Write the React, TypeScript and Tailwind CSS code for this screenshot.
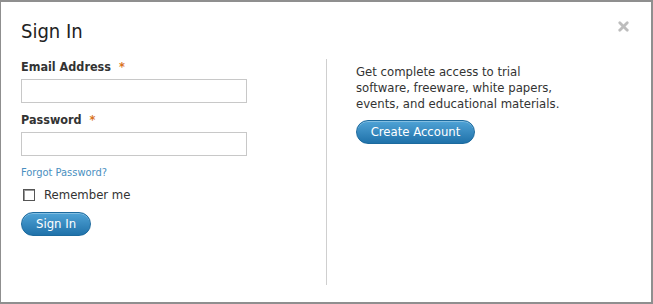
import { X } from "lucide-react";

const font = { fontFamily: '"DejaVu Sans Condensed", "DejaVu Sans", Tahoma, sans-serif' };

function Field({ label }: { label: string }) {
  return (
    <div className="flex flex-col">
      <label className="text-[12.5px] leading-[16px] font-bold text-[#333] h-[16px]">
        {label}
        <span className="text-[#d9731e] ml-[8px]">*</span>
      </label>
      <input className="mt-[4px] w-[226px] h-[24px] border border-[#c8c8c8] bg-white outline-none" />
    </div>
  );
}

function BlueButton({ children, w }: { children: string; w: string }) {
  return (
    <button
      className={`${w} h-[24px] rounded-full text-white text-[13px] leading-none border border-[#1c6a9e] bg-gradient-to-b from-[#4fa3d6] to-[#1f72aa] shadow-[inset_0_1px_0_rgba(255,255,255,0.3)]`}
    >
      {children}
    </button>
  );
}

export default function App() {
  return (
    <div className="w-[653px] h-[304px] bg-[#8f8f8f] pt-[2px] pl-[1px] pr-[2px] pb-[2px]" style={font}>
      <div className="relative w-full h-full bg-white flex flex-col pl-[20px]">
        <h1 className="mt-[17px] text-[20px] leading-[24px] text-[#222] h-[24px]">Sign In</h1>
        <button className="absolute right-[20px] top-[17px] text-[#bdbdbd]">
          <X className="size-[15px]" strokeWidth={4.5} />
        </button>
        <div className="flex mt-[16px]">
          <div className="w-[305px] flex flex-col">
            <Field label="Email Address" />
            <div className="mt-[9px]">
              <Field label="Password" />
            </div>
            <a className="mt-[10px] text-[11px] leading-[13px] text-[#4a8fc0]">Forgot Password?</a>
            <div className="flex items-center mt-[9px] h-[14px]">
              <span className="ml-[2px] w-[12px] h-[12px] border border-[#555] bg-white shadow-[inset_1px_1px_0_#999]" />
              <span className="ml-[9px] text-[13px] leading-[14px] text-[#333]">Remember me</span>
            </div>
            <div className="mt-[9px]">
              <BlueButton w="w-[70px]">Sign In</BlueButton>
            </div>
          </div>
          <div className="w-px bg-[#cfcfcf] h-[226px]" />
          <div className="pl-[29px] pt-[5px] flex flex-col">
            <p className="text-[13px] leading-[16px] text-[#333] w-[220px]">
              Get complete access to trial software, freeware, white papers, events, and educational materials.
            </p>
            <div className="mt-[7px]">
              <BlueButton w="w-[119px]">Create Account</BlueButton>
            </div>
          </div>
        </div>
      </div>
    </div>
  );
}
